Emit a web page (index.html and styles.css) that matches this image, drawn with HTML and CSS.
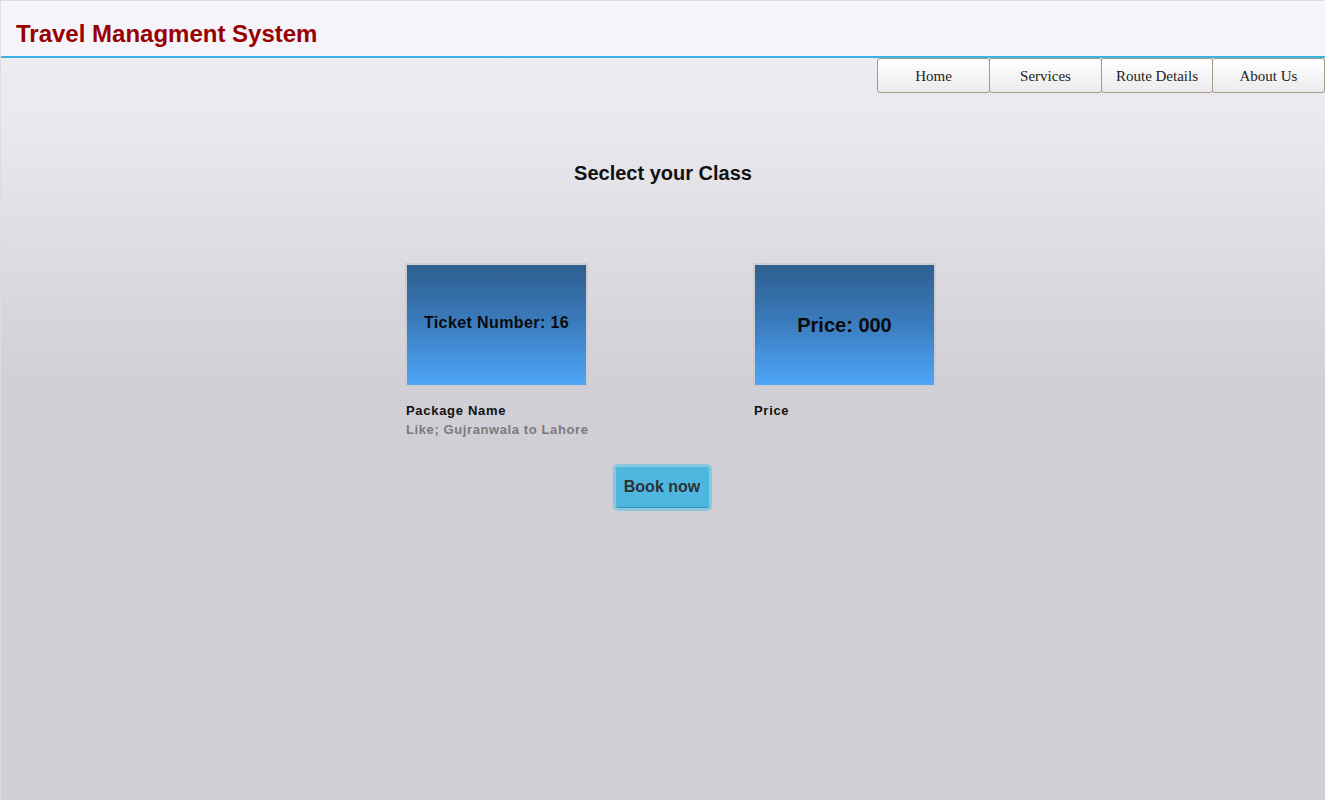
FILE: index.html
```html
<!DOCTYPE html>
<html>
<head>
<meta charset="utf-8">
<title>Travel Managment System</title>
<link rel="stylesheet" href="styles.css">
</head>
<body>
<div class="page">
  <header class="header">
    <h1 class="brand">Travel Managment System</h1>
  </header>
  <nav class="nav">
    <a class="nav-btn" href="#">Home</a>
    <a class="nav-btn" href="#">Services</a>
    <a class="nav-btn" href="#">Route Details</a>
    <a class="nav-btn" href="#">About Us</a>
  </nav>
  <main class="main">
    <h2 class="title">Seclect your Class</h2>
    <div class="cards">
      <div class="card">
        <div class="tile"><span class="tile-text">Ticket Number: 16</span></div>
        <div class="label">Package Name</div>
        <div class="sub">Like; Gujranwala to Lahore</div>
      </div>
      <div class="card">
        <div class="tile"><span class="tile-text big">Price: 000</span></div>
        <div class="label">Price</div>
      </div>
    </div>
    <div class="actions">
      <button class="book">Book now</button>
    </div>
  </main>
</div>
</body>
</html>
```

FILE: styles.css
```css
html, body {
  margin: 0;
  padding: 0;
  height: 100%;
}
body {
  font-family: "Liberation Sans", Arial, sans-serif;
  background: #d0cfd5;
}
.page {
  min-height: 800px;
  box-sizing: border-box;
  border-top: 1px solid #dcdce2;
  border-left: 1px solid #dcdce2;
  background: linear-gradient(to bottom, #f0f0f4 0px, #e9e8ed 130px, #dad9df 280px, #d0cfd5 390px, #d0cfd5 100%);
}
.header {
  height: 55px;
  background: #f4f4f9;
  border-bottom: 2px solid #3bb1e0;
  box-sizing: content-box;
  display: flex;
  align-items: flex-end;
}
.brand {
  margin: 0 0 8px 15px;
  font-size: 24px;
  font-weight: bold;
  color: #990000;
  line-height: 28px;
}
.nav {
  display: flex;
  justify-content: flex-end;
}
.nav-btn {
  width: 113px;
  height: 35px;
  box-sizing: border-box;
  display: flex;
  align-items: center;
  justify-content: center;
  padding-top: 2px;
  margin-left: -1px;
  border: 1px solid #a8998a;
  border-radius: 3px;
  background: linear-gradient(to bottom, #ffffff 0%, #f4f4f4 55%, #ebebeb 100%);
  font-family: "Liberation Serif", "Times New Roman", serif;
  font-size: 15px;
  color: #222;
  text-decoration: none;
}
.nav-btn:nth-child(3) {
  width: 112px;
}
.main {
  display: flex;
  flex-direction: column;
  align-items: center;
}
.title {
  margin: 68px 0 0 0;
  font-size: 20px;
  line-height: 24px;
  font-weight: bold;
  color: #111;
}
.cards {
  display: flex;
  gap: 165px;
  margin-top: 78px;
  padding-left: 15px;
}
.card {
  width: 183px;
}
.tile {
  width: 183px;
  height: 124px;
  box-sizing: border-box;
  border: 2px solid #cdcdd0;
  background: linear-gradient(to bottom, #2e5f8f 0%, #3b7dbf 50%, #4fa6f9 100%);
  display: flex;
  align-items: center;
  justify-content: center;
}
.tile-text {
  font-size: 16px;
  font-weight: bold;
  letter-spacing: 0.4px;
  color: #0a0a0a;
  margin-top: -4px;
}
.tile-text.big {
  font-size: 20px;
  letter-spacing: 0;
  margin-top: 0;
}
.label {
  margin-top: 16px;
  padding-left: 1px;
  font-size: 13px;
  font-weight: bold;
  letter-spacing: 0.7px;
  color: #111;
  line-height: 16px;
  white-space: nowrap;
}
.sub {
  margin-top: 3px;
  padding-left: 1px;
  font-size: 13px;
  font-weight: bold;
  letter-spacing: 0.6px;
  color: #7a7a7e;
  line-height: 16px;
  white-space: nowrap;
}
.actions {
  margin-top: 29px;
  padding-right: 2px;
}
.book {
  width: 93px;
  height: 41px;
  padding: 0;
  border: none;
  border-bottom: 1px solid #3a8fb8;
  background: #4eb7e0;
  box-shadow: 0 0 0 3px #8cc7e0;
  border-radius: 2px;
  font-family: "Liberation Sans", Arial, sans-serif;
  font-size: 16px;
  font-weight: bold;
  color: #2e3236;
  cursor: pointer;
}
```
